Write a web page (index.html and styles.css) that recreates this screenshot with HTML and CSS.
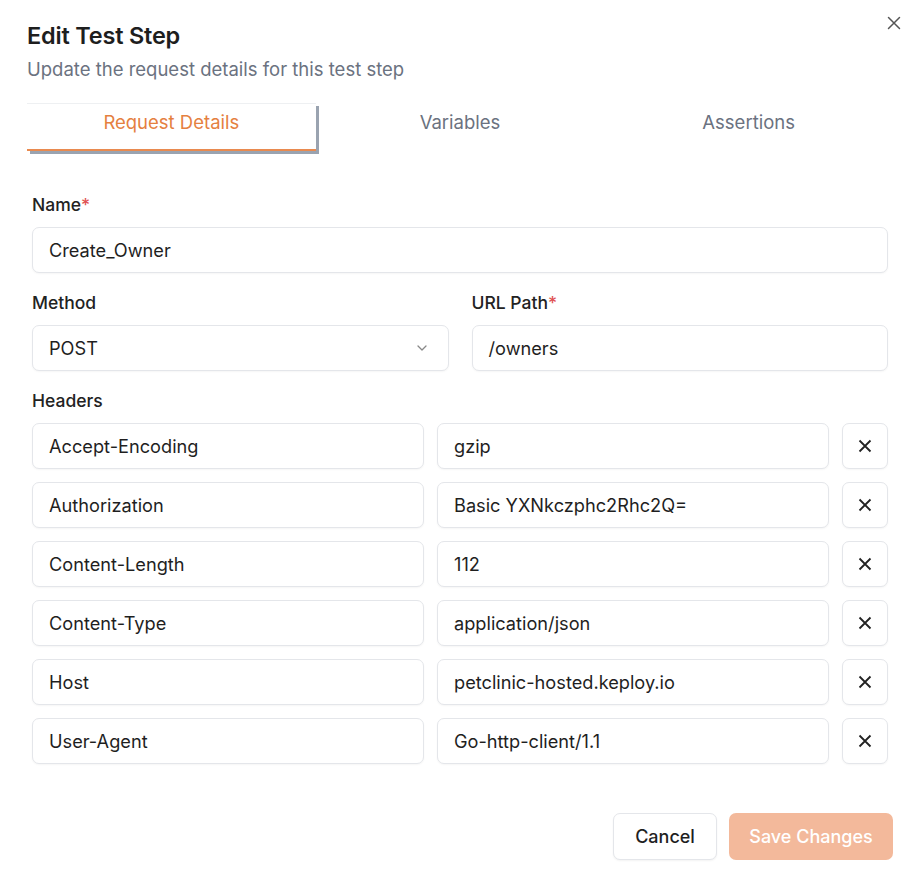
FILE: index.html
```html
<!DOCTYPE html>
<html>
<head>
<meta charset="utf-8">
<link rel="stylesheet" href="styles.css">
</head>
<body>
<div class="dialog">
  <button class="close" aria-label="Close">
    <svg width="14" height="14" viewBox="0 0 14 14"><path d="M1.5 1.5 L12.5 12.5 M12.5 1.5 L1.5 12.5" stroke="#555" stroke-width="1.5" fill="none" stroke-linecap="round"/></svg>
  </button>
  <h1 class="title">Edit Test Step</h1>
  <p class="subtitle">Update the request details for this test step</p>

  <div class="tabs">
    <div class="tab active">Request Details</div>
    <div class="tab">Variables</div>
    <div class="tab">Assertions</div>
  </div>

  <form class="form">
    <div class="field">
      <label class="label">Name<span class="req">*</span></label>
      <div class="input">Create_Owner</div>
    </div>
    <div class="two">
      <div class="field">
        <label class="label">Method</label>
        <div class="input select">POST
          <svg width="14" height="14" viewBox="0 0 14 14"><path d="M3 5 L7 9 L11 5" stroke="#888" stroke-width="1.3" fill="none" stroke-linecap="round" stroke-linejoin="round"/></svg>
        </div>
      </div>
      <div class="field">
        <label class="label">URL Path<span class="req">*</span></label>
        <div class="input">/owners</div>
      </div>
    </div>
    <div class="field">
      <label class="label">Headers</label>
      <div class="headers">
        <div class="hrow"><div class="input">Accept-Encoding</div><div class="input">gzip</div><button type="button" class="xbtn"><svg width="16" height="16" viewBox="0 0 16 16"><path d="M2.5 2.5 L13.5 13.5 M13.5 2.5 L2.5 13.5" stroke="#222" stroke-width="1.8" fill="none"/></svg></button></div>
        <div class="hrow"><div class="input">Authorization</div><div class="input">Basic YXNkczphc2Rhc2Q=</div><button type="button" class="xbtn"><svg width="16" height="16" viewBox="0 0 16 16"><path d="M2.5 2.5 L13.5 13.5 M13.5 2.5 L2.5 13.5" stroke="#222" stroke-width="1.8" fill="none"/></svg></button></div>
        <div class="hrow"><div class="input">Content-Length</div><div class="input">112</div><button type="button" class="xbtn"><svg width="16" height="16" viewBox="0 0 16 16"><path d="M2.5 2.5 L13.5 13.5 M13.5 2.5 L2.5 13.5" stroke="#222" stroke-width="1.8" fill="none"/></svg></button></div>
        <div class="hrow"><div class="input">Content-Type</div><div class="input">application/json</div><button type="button" class="xbtn"><svg width="16" height="16" viewBox="0 0 16 16"><path d="M2.5 2.5 L13.5 13.5 M13.5 2.5 L2.5 13.5" stroke="#222" stroke-width="1.8" fill="none"/></svg></button></div>
        <div class="hrow"><div class="input">Host</div><div class="input">petclinic-hosted.keploy.io</div><button type="button" class="xbtn"><svg width="16" height="16" viewBox="0 0 16 16"><path d="M2.5 2.5 L13.5 13.5 M13.5 2.5 L2.5 13.5" stroke="#222" stroke-width="1.8" fill="none"/></svg></button></div>
        <div class="hrow"><div class="input">User-Agent</div><div class="input">Go-http-client/1.1</div><button type="button" class="xbtn"><svg width="16" height="16" viewBox="0 0 16 16"><path d="M2.5 2.5 L13.5 13.5 M13.5 2.5 L2.5 13.5" stroke="#222" stroke-width="1.8" fill="none"/></svg></button></div>
      </div>
    </div>
  </form>

  <div class="footer">
    <button class="btn cancel">Cancel</button>
    <button class="btn save">Save Changes</button>
  </div>
</div>
</body>
</html>
```

FILE: styles.css
```css
* { box-sizing: border-box; }
html, body { margin: 0; padding: 0; background: #fff; }
body {
  font-family: Inter, "Noto Sans", sans-serif;
  color: #1f1f1f;
  width: 920px;
  height: 878px;
  overflow: hidden;
}
.dialog {
  position: relative;
  padding: 22px 27px 0 27px;
}
.close {
  position: absolute;
  top: 16px;
  right: 19px;
  width: 14px;
  height: 14px;
  padding: 0;
  border: 0;
  background: transparent;
  display: flex;
}
.title {
  margin: 0;
  font-size: 23.5px;
  line-height: 28px;
  font-weight: 600;
  color: #1e1e1e;
  letter-spacing: -0.2px;
}
.subtitle {
  margin: 7px 0 0;
  font-size: 18.5px;
  line-height: 24px;
  color: #6b7280;
}
.tabs {
  margin-top: 22px;
  display: grid;
  grid-template-columns: 1fr 1fr 1fr;
  height: 48px;
}
.tab {
  display: flex;
  align-items: center;
  justify-content: center;
  font-size: 18.5px;
  color: #6b7280;
  padding-bottom: 10px;
}
.tab.active {
  color: #e5803f;
  border-top: 1px solid #eef0f2;
  border-bottom: 2px solid #e98a4f;
  box-shadow: 3px 3px 0 #9aa3b0;
  padding-bottom: 10px;
}
.form {
  margin-top: 42px;
  padding: 0 5px 0 5px;
  display: flex;
  flex-direction: column;
  gap: 18px;
}
.field {
  display: flex;
  flex-direction: column;
  gap: 10px;
}
.label {
  font-size: 17.5px;
  line-height: 24px;
  font-weight: 500;
  color: #222;
}
.req { color: #e05252; }
.input {
  height: 46px;
  border: 1px solid #e4e6ea;
  border-radius: 7px;
  box-shadow: 0 1px 2px rgba(0,0,0,0.04);
  padding: 0 16px;
  display: flex;
  align-items: center;
  font-size: 18.2px;
  color: #1f1f1f;
  background: #fff;
}
.select { justify-content: space-between; padding-right: 19px; }
.two {
  display: grid;
  grid-template-columns: 1fr 1fr;
  gap: 23px;
}
.headers {
  display: flex;
  flex-direction: column;
  gap: 13px;
}
.hrow {
  display: grid;
  grid-template-columns: 1fr 1fr 46px;
  gap: 13px;
}
.xbtn {
  height: 46px;
  width: 46px;
  border: 1px solid #e4e6ea;
  border-radius: 7px;
  background: #fff;
  box-shadow: 0 1px 2px rgba(0,0,0,0.04);
  display: flex;
  align-items: center;
  justify-content: center;
  padding: 0;
}
.footer {
  margin-top: 49px;
  display: flex;
  justify-content: flex-end;
  gap: 12px;
}
.btn {
  height: 47px;
  border-radius: 7px;
  font-family: inherit;
  font-size: 18px;
  font-weight: 500;
  padding: 0;
}
.cancel {
  background: #fff;
  border: 1px solid #e4e6ea;
  color: #1f1f1f;
  box-shadow: 0 1px 2px rgba(0,0,0,0.05);
  width: 104px;
}
.save {
  background: #f3b99b;
  border: 0;
  color: #fff;
  width: 164px;
}
```
